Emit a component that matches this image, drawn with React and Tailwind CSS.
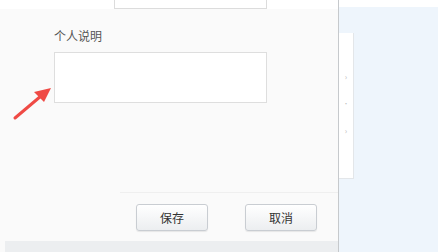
import React from 'react';

const font = { fontFamily: '"Noto Sans CJK SC", "Liberation Sans", sans-serif' };

const Btn = ({ children }) => (
    <button className='w-[72px] h-[27px] rounded-[3px] border border-[#c9cdd2] bg-gradient-to-b from-white to-[#eceef0] shadow-[0_1px_1px_rgba(0,0,0,0.08)] text-[12px] text-[#333] leading-none'>
        {children}
    </button>
);

const App = () => {
    return (
        <div className='relative w-[438px] h-[252px] flex overflow-hidden bg-white' style={font}>
            {/* dialog */}
            <div className='w-[339px] h-full flex flex-col bg-[#fafafa] border-r border-[#c6c9cc]'>
                <div className='h-[9px] bg-white'>
                    <div className='ml-[114px] w-[153px] h-[9px] border-x border-b border-[#dcdcdc] bg-white'></div>
                </div>
                <div className='pl-[54px] pt-[19px]'>
                    <p className='text-[12px] leading-[16px] text-[#555]'>个人说明</p>
                    <div className='mt-[8px] w-[213px] h-[51px] border border-[#dedede] bg-white'></div>
                </div>
                <div className='mt-[89px] ml-[120px] border-t border-[#efefef]'></div>
                <div className='flex gap-[37px] pl-[136px] pt-[11px]'>
                    <Btn>保存</Btn>
                    <Btn>取消</Btn>
                </div>
                <div className='mt-auto ml-[5px] h-[11px] bg-[#eceef0]'></div>
            </div>

            {/* right side */}
            <div className='flex-1 flex flex-col'>
                <div className='h-[7px] bg-white'></div>
                <div className='flex-1 bg-[#eef5fc] pt-[26px]'>
                    <div className='w-[15px] h-[146px] bg-white border-r border-b border-[#e3e6e9] flex flex-col items-center pt-[40px] gap-[20px] text-[#bbb]'>
                        <span className='text-[8px] leading-none'>›</span>
                        <span className='text-[6px] leading-none'>·</span>
                        <span className='text-[8px] leading-none'>›</span>
                    </div>
                </div>
            </div>

            {/* annotation arrow */}
            <svg className='absolute left-0 top-0' width='70' height='130' viewBox='0 0 70 130'>
                <path d='M15 118 L41 96' stroke='#ef4a45' strokeWidth='3' strokeLinecap='round' />
                <path d='M51 88 L34 92 L44 102 Z' fill='#ef4a45' />
            </svg>
        </div>
    );
};

export default App;
